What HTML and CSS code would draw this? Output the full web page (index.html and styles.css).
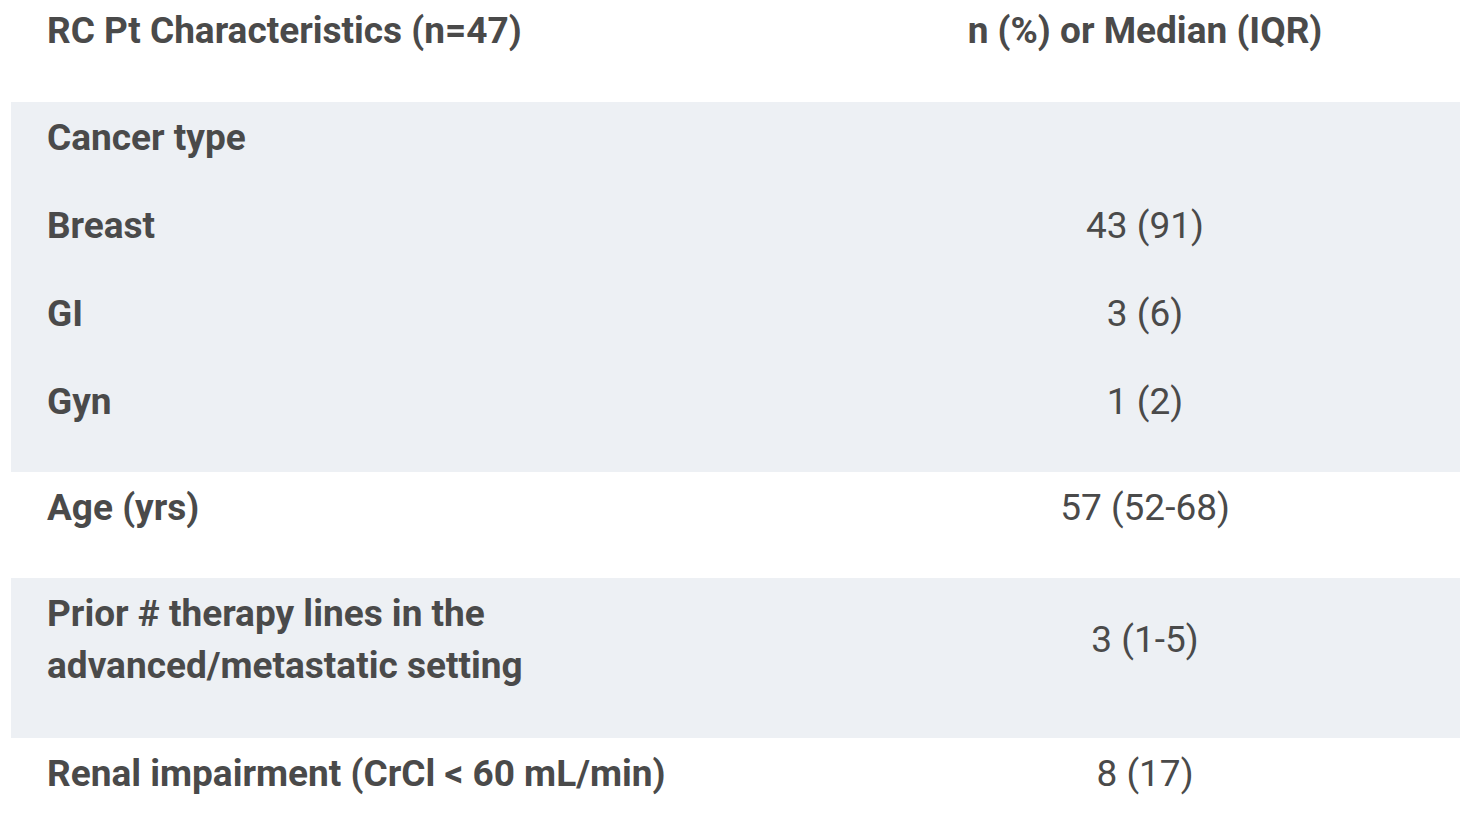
FILE: index.html
```html
<!DOCTYPE html>
<html lang="en">
<head>
<meta charset="utf-8">
<title>RC Pt Characteristics</title>
<link rel="stylesheet" href="styles.css">
</head>
<body>
<div class="table">
  <div class="row head">
    <div class="label">RC Pt Characteristics (n=47)</div>
    <div class="value strong">n (%) or Median (IQR)</div>
  </div>
  <div class="row shaded group">
    <div class="label">Cancer type</div>
    <div class="value"></div>
    <div class="label">Breast</div>
    <div class="value">43 (91)</div>
    <div class="label">GI</div>
    <div class="value">3 (6)</div>
    <div class="label">Gyn</div>
    <div class="value">1 (2)</div>
  </div>
  <div class="row">
    <div class="label">Age (yrs)</div>
    <div class="value">57 (52-68)</div>
  </div>
  <div class="row shaded tall">
    <div class="label">Prior # therapy lines in the<br>advanced/metastatic setting</div>
    <div class="value">3 (1-5)</div>
  </div>
  <div class="row">
    <div class="label">Renal impairment (CrCl &lt; 60 mL/min)</div>
    <div class="value">8 (17)</div>
  </div>
</div>
</body>
</html>
```

FILE: styles.css
```css
html, body {
  margin: 0;
  padding: 0;
  background: #ffffff;
}

body {
  font-family: Roboto, "Liberation Sans", Arial, sans-serif;
  font-size: 37px;
  line-height: 52px;
  color: #4a4a4a;
}

.table {
  width: 1449px;
  margin-left: 11px;
}

.row {
  display: grid;
  grid-template-columns: 819px 1fr;
  align-items: center;
  padding: 10px 0 44px;
}

.row.head {
  padding: 5px 0 45px;
}

.row.group {
  row-gap: 36px;
}

.row.tall {
  padding-bottom: 46px;
}

.shaded {
  background: #edf0f4;
}

.label {
  padding-left: 36px;
  font-weight: 700;
}

.value {
  text-align: center;
  font-weight: 400;
}

.value.strong {
  font-weight: 700;
}
```
